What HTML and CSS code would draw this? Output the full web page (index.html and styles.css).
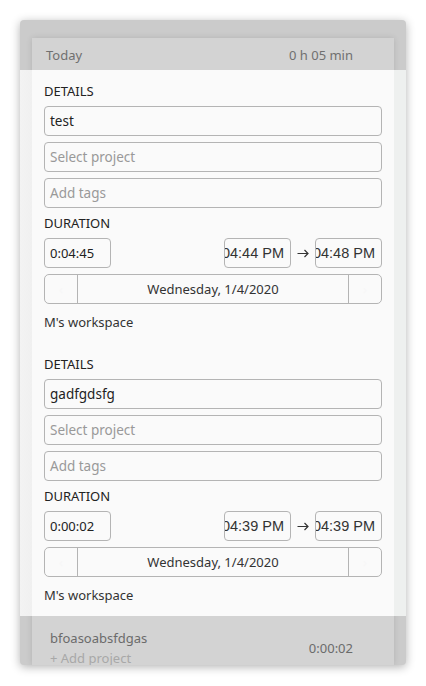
FILE: index.html
```html
<!DOCTYPE html>
<html lang="en">
<head>
  <meta charset="UTF-8">
  <meta name="viewport" content="width=device-width, initial-scale=1.0">
  <title>Time entries</title>
  <link rel="stylesheet" href="styles.css">
</head>
<body>
  <div class="popup">
    <div class="list">
      <div class="day-header">
        <span>Today</span>
        <span>0 h 05 min</span>
      </div>
      <div class="expanded">
        <div class="entry">
          <div class="label">DETAILS</div>
          <div class="field">test</div>
          <div class="field placeholder">Select project</div>
          <div class="field placeholder">Add tags</div>
          <div class="label">DURATION</div>
          <div class="time-row">
            <div class="field time duration">0:04:45</div>
            <div class="range">
              <div class="field time clock"><span>04:44 PM</span></div>
              <span class="arrow"><svg width="12" height="9" viewBox="0 0 12 9"><path d="M0.5 4.5H11M7.5 1L11 4.5L7.5 8" fill="none" stroke="#333" stroke-width="1.2"/></svg></span>
              <div class="field time clock"><span>04:48 PM</span></div>
            </div>
          </div>
          <div class="date-row">
            <div class="nav">&lsaquo;</div>
            <div class="date">Wednesday, 1/4/2020</div>
            <div class="nav">&rsaquo;</div>
          </div>
          <div class="workspace">M's workspace</div>
        </div>
        <div class="entry">
          <div class="label">DETAILS</div>
          <div class="field">gadfgdsfg</div>
          <div class="field placeholder">Select project</div>
          <div class="field placeholder">Add tags</div>
          <div class="label">DURATION</div>
          <div class="time-row">
            <div class="field time duration">0:00:02</div>
            <div class="range">
              <div class="field time clock"><span>04:39 PM</span></div>
              <span class="arrow"><svg width="12" height="9" viewBox="0 0 12 9"><path d="M0.5 4.5H11M7.5 1L11 4.5L7.5 8" fill="none" stroke="#333" stroke-width="1.2"/></svg></span>
              <div class="field time clock"><span>04:39 PM</span></div>
            </div>
          </div>
          <div class="date-row">
            <div class="nav">&lsaquo;</div>
            <div class="date">Wednesday, 1/4/2020</div>
            <div class="nav">&rsaquo;</div>
          </div>
          <div class="workspace">M's workspace</div>
        </div>
      </div>
      <div class="entry-row">
        <div class="entry-info">
          <div class="entry-title">bfoasoabsfdgas</div>
          <div class="entry-project">+ Add project</div>
        </div>
        <div class="entry-duration">0:00:02</div>
      </div>
    </div>
  </div>
</body>
</html>
```

FILE: styles.css
```css
body {
  font-family: "Noto Sans", "Open Sans", sans-serif;
  font-size: 13px;
  background-color: #fff;
  color: #222;
  margin: 0;
  padding: 20px;
}
.popup {
  width: 386px;
  height: 645px;
  box-sizing: border-box;
  padding-top: 18px;
  background: #cbcbcb;
  border-radius: 4px;
  box-shadow: 0 2px 10px rgba(0, 0, 0, 0.3);
  overflow: hidden;
}
.list {
  margin: 0 12px;
  height: 100%;
  background: #d3d3d3;
  box-shadow: 0 0 6px rgba(0, 0, 0, 0.12);
}
.day-header {
  height: 32px;
  display: flex;
  align-items: center;
  justify-content: space-between;
  padding: 2px 41px 0 14px;
  box-sizing: border-box;
  color: #707070;
}
.expanded {
  margin: 0 -12px;
  padding: 0 24px;
  background: linear-gradient(to right, #f3f3f3 0, #f0f0f0 12px, #fafafa 12px, #fafafa calc(100% - 12px), #eef0ef calc(100% - 12px));
}
.entry {
  display: flex;
  flex-direction: column;
  gap: 6px;
  padding: 12px 0;
}
.label {
  line-height: 18px;
  color: #222;
}
.field {
  height: 30px;
  box-sizing: border-box;
  display: flex;
  align-items: center;
  padding: 0 5px;
  border: 1px solid #b4b4b4;
  border-radius: 4px;
  background: #fafafa;
  font-size: 13.5px;
  color: #222;
}
.placeholder {
  color: #999;
}
.time-row {
  display: flex;
  justify-content: space-between;
}
.time {
  width: 67px;
  font-size: 13px;
}
.range {
  display: flex;
  align-items: center;
}
.clock {
  justify-content: flex-end;
  overflow: hidden;
  padding: 0 6px 0 0;
  font-family: "Liberation Sans", Arial, sans-serif;
  font-size: 14.5px;
  color: #333;
}
.clock span {
  white-space: nowrap;
  flex-shrink: 0;
}
.arrow {
  width: 24px;
  display: flex;
  align-items: center;
  justify-content: center;
}
.date-row {
  height: 30px;
  box-sizing: border-box;
  display: flex;
  border: 1px solid #b4b4b4;
  border-radius: 5px;
}
.nav {
  width: 32px;
  display: flex;
  align-items: center;
  justify-content: center;
  color: #f7f7f7;
}
.nav:first-child {
  border-right: 1px solid #b4b4b4;
}
.nav:last-child {
  border-left: 1px solid #b4b4b4;
}
.date {
  flex: 1;
  display: flex;
  align-items: center;
  justify-content: center;
  color: #333;
}
.workspace {
  margin-top: 3px;
  line-height: 18px;
  color: #333;
}
.entry-row {
  display: flex;
  align-items: center;
  justify-content: space-between;
  padding: 13px 41px 0 18px;
}
.entry-info {
  line-height: 18px;
}
.entry-title {
  color: #6b6b6b;
}
.entry-project {
  margin-top: 2px;
  color: #a8a8a8;
}
.entry-duration {
  color: #6b6b6b;
}
```
